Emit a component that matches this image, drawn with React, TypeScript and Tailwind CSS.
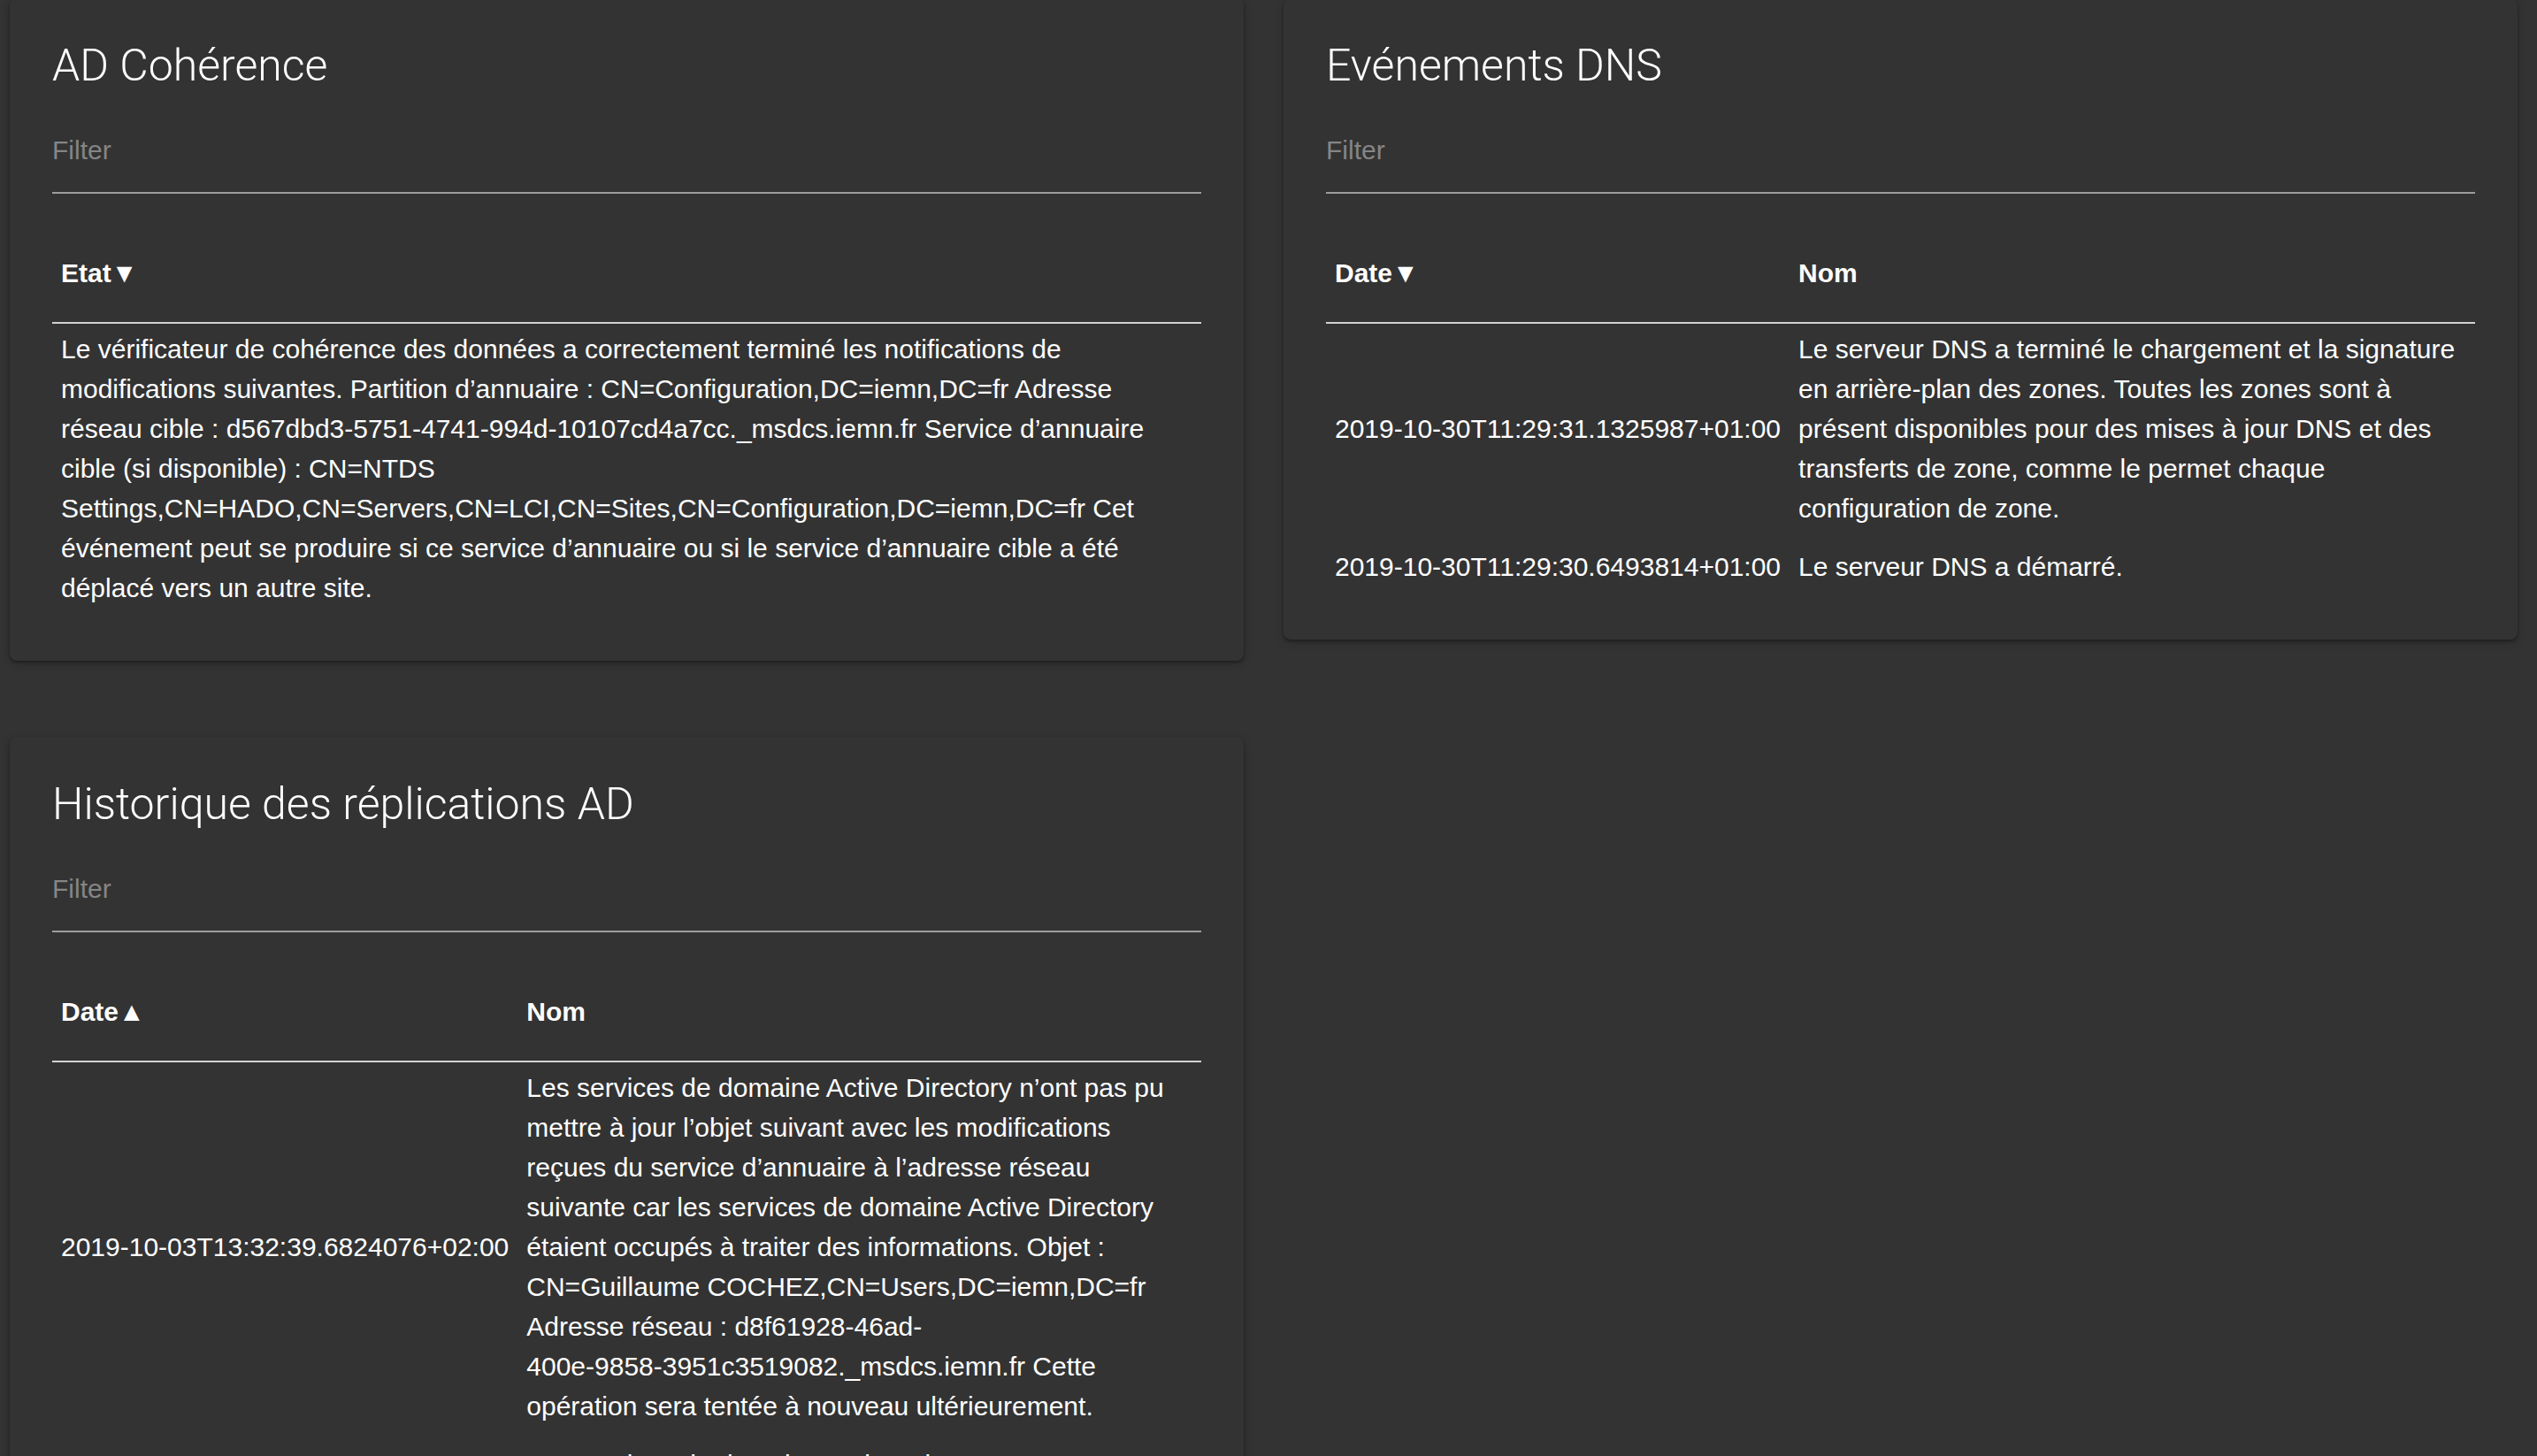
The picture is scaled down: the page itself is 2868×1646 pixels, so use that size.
import React, { FC, ReactNode } from 'react'

interface IColumn {
  label: string
  sort?: 'asc' | 'desc'
}

interface IProps {
  title: string
  columns: IColumn[]
  rows: ReactNode[][]
}

const coherence = [
  [
    'Le vérificateur de cohérence des données a correctement terminé les notifications de modifications suivantes. Partition d’annuaire : CN=Configuration,DC=iemn,DC=fr Adresse réseau cible : d567dbd3-5751-4741-994d-10107cd4a7cc._msdcs.iemn.fr Service d’annuaire cible (si disponible) : CN=NTDS Settings,CN=HADO,CN=Servers,CN=LCI,CN=Sites,CN=Configuration,DC=iemn,DC=fr Cet événement peut se produire si ce service d’annuaire ou si le service d’annuaire cible a été déplacé vers un autre site.',
  ],
]

const dns = [
  [
    '2019-10-30T11:29:31.1325987+01:00',
    'Le serveur DNS a terminé le chargement et la signature en arrière-plan des zones. Toutes les zones sont à présent disponibles pour des mises à jour DNS et des transferts de zone, comme le permet chaque configuration de zone.',
  ],
  ['2019-10-30T11:29:30.6493814+01:00', 'Le serveur DNS a démarré.'],
]

const replicationText = (
  <>
    Les services de domaine Active Directory n’ont pas pu mettre à jour l’objet suivant avec les modifications reçues du service d’annuaire à l’adresse réseau suivante car les services de domaine Active Directory étaient occupés à traiter des informations. Objet : CN=Guillaume COCHEZ,CN=Users,DC=iemn,DC=fr Adresse réseau : d8f61928-46ad-
    <span className="whitespace-nowrap">400e-9858-3951c3519082._msdcs.iemn.fr</span> Cette opération sera tentée à nouveau ultérieurement.
  </>
)

const replications = [
  ['2019-10-03T13:32:39.6824076+02:00', replicationText],
  ['2019-10-03T13:37:41.2290143+02:00', replicationText],
]

const Panel: FC<IProps> = ({ title, columns, rows }) => {
  const multi = columns.length > 1

  return (
    <section className="rounded-[8px] bg-[#333333] px-[48px] pt-[44px] pb-[45px] shadow-[0_2px_3px_rgba(0,0,0,0.28),0_3px_10px_rgba(0,0,0,0.22)]">
      <h2 className="font-['Roboto',sans-serif] text-[50px] font-light leading-[64px] text-white">{title}</h2>
      {/* Filter field */}
      <div className="mt-[41px] border-b-2 border-[#9d9d9d] pb-[25px]">
        <span className="block text-[30px] leading-[45px] text-[#858585]">Filter</span>
      </div>
      <table className="mt-[34px] w-full border-collapse text-[30px] leading-[45px] text-white">
        <thead>
          <tr className="border-b-2 border-[#d2d2d2]">
            {columns.map(({ label, sort }) => (
              <th key={label} className="px-[10px] py-[33px] text-left font-bold">
                {label}
                {sort === 'desc' && '▼'}
                {sort === 'asc' && '▲'}
              </th>
            ))}
          </tr>
        </thead>
        <tbody>
          {rows.map((cells, i) => (
            <tr key={i}>
              {cells.map((cell, j) => (
                <td
                  key={j}
                  className={multi && j === 0 ? 'whitespace-nowrap px-[10px] pt-[6px] pb-[15px] align-middle' : 'px-[10px] pt-[6px] pb-[15px] align-middle'}
                >
                  {cell}
                </td>
              ))}
            </tr>
          ))}
        </tbody>
      </table>
    </section>
  )
}

const App: FC = () => {
  return (
    <div className="h-screen overflow-hidden bg-[#333333] font-['Liberation_Sans',Arial,sans-serif]">
      <div className="-mt-[2px] grid grid-cols-2 items-start gap-x-[45px] gap-y-[86px] pl-[11px] pr-[22px]">
        <Panel title="AD Cohérence" columns={[{ label: 'Etat', sort: 'desc' }]} rows={coherence} />
        <Panel title="Evénements DNS" columns={[{ label: 'Date', sort: 'desc' }, { label: 'Nom' }]} rows={dns} />
        <Panel title="Historique des réplications AD" columns={[{ label: 'Date', sort: 'asc' }, { label: 'Nom' }]} rows={replications} />
      </div>
    </div>
  )
}

export default App
